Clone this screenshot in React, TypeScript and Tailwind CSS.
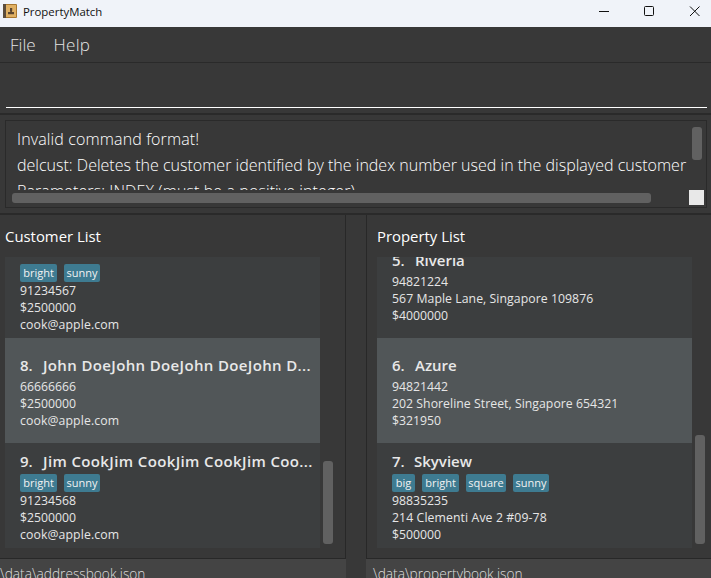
import React from "react";

type Entry = {
  index: string;
  name?: string;
  nameClass: string;
  tags: { label: string; className: string }[];
  lines: { text: string; className: string }[];
  rowClass: string;
};

const customers: Entry[] = [
  {
    index: "7.",
    nameClass: "",
    tags: [
      { label: "bright", className: "w-[37px]" },
      { label: "sunny", className: "w-[36px]" },
    ],
    lines: [
      { text: "91234567", className: "" },
      { text: "$2500000", className: "" },
      { text: "cook@apple.com", className: "tracking-[0.11px]" },
    ],
    rowClass: "h-[81px] bg-[#3c3e3f] pb-[5px]",
  },
  {
    index: "8.",
    name: "John DoeJohn DoeJohn DoeJohn D...",
    nameClass: "tracking-[0.36px]",
    tags: [],
    lines: [
      { text: "66666666", className: "" },
      { text: "$2500000", className: "" },
      { text: "cook@apple.com", className: "tracking-[0.11px]" },
    ],
    rowClass: "h-[105px] bg-[#515658] pb-[14px]",
  },
  {
    index: "9.",
    name: "Jim CookJim CookJim CookJim Coo...",
    nameClass: "tracking-[0.38px]",
    tags: [
      { label: "bright", className: "w-[37px]" },
      { label: "sunny", className: "w-[36px]" },
    ],
    lines: [
      { text: "91234568", className: "" },
      { text: "$2500000", className: "" },
      { text: "cook@apple.com", className: "tracking-[0.11px]" },
    ],
    rowClass: "h-[105px] bg-[#3c3e3f] pb-[5px]",
  },
];

const properties: Entry[] = [
  {
    index: "5.",
    name: "Riveria",
    nameClass: "",
    tags: [],
    lines: [
      { text: "94821224", className: "" },
      { text: "567 Maple Lane, Singapore 109876", className: "tracking-[0.06px]" },
      { text: "$4000000", className: "" },
    ],
    rowClass: "h-[81px] bg-[#3c3e3f] pb-[14px]",
  },
  {
    index: "6.",
    name: "Azure",
    nameClass: "",
    tags: [],
    lines: [
      { text: "94821442", className: "" },
      { text: "202 Shoreline Street, Singapore 654321", className: "tracking-[0.04px]" },
      { text: "$321950", className: "" },
    ],
    rowClass: "h-[105px] bg-[#515658] pb-[14px]",
  },
  {
    index: "7.",
    name: "Skyview",
    nameClass: "-ml-px",
    tags: [
      { label: "big", className: "w-[23px]" },
      { label: "bright", className: "w-[37px]" },
      { label: "square", className: "w-[40px]" },
      { label: "sunny", className: "w-[36px]" },
    ],
    lines: [
      { text: "98835235", className: "" },
      { text: "214 Clementi Ave 2 #09-78", className: "tracking-[0.1px]" },
      { text: "$500000", className: "" },
    ],
    rowClass: "h-[105px] bg-[#3c3e3f] pb-[5px]",
  },
];

function Card({ entry }: { entry: Entry }) {
  return (
    <li className={`flex shrink-0 flex-col justify-end overflow-hidden pl-[15px] ${entry.rowClass}`}>
      {entry.name && (
        <div className="flex h-[26px] shrink-0 items-start text-[15px] font-semibold leading-[26px] text-[#e8e8e8]">
          <span className="w-[23px] shrink-0">{entry.index}</span>
          <span className={`whitespace-nowrap ${entry.nameClass}`}>{entry.name}</span>
        </div>
      )}
      {entry.tags.length > 0 && (
        <div className="flex h-[18px] shrink-0 gap-[7px]">
          {entry.tags.map((tag) => (
            <span
              key={tag.label}
              className={`h-[18px] rounded-[2px] bg-[#3e7b91] text-center text-[11px] leading-[18px] text-[#f2f2f2] ${tag.className}`}
            >
              {tag.label}
            </span>
          ))}
        </div>
      )}
      {entry.lines.map((line) => (
        <p
          key={line.text}
          className={`h-[17px] shrink-0 whitespace-nowrap text-[12.25px] leading-[17px] text-[#e6e6e6] ${line.className}`}
        >
          {line.text}
        </p>
      ))}
    </li>
  );
}

function ListPanel({
  title,
  entries,
  thumbClass,
  className,
}: {
  title: string;
  entries: Entry[];
  thumbClass: string;
  className: string;
}) {
  return (
    <section className={`flex h-[344px] flex-col border-b border-[#282828] ${className}`}>
      <h2 className="h-[42px] shrink-0 pt-[10px] text-[14.9px] leading-[23px] text-white">{title}</h2>
      <div className="flex">
        <ul className="flex h-[291px] w-[315px] flex-col justify-end overflow-hidden">
          {entries.map((entry) => (
            <Card key={entry.index} entry={entry} />
          ))}
        </ul>
        <div className="flex h-[287px] flex-col justify-end pl-[3px]">
          <div className={`w-[10px] rounded-[3px] bg-[#616161] ${thumbClass}`} />
        </div>
      </div>
    </section>
  );
}

export default function App() {
  return (
    <div className="flex h-[578px] w-[711px] flex-col overflow-hidden bg-[#383838] font-['Open_Sans','Noto_Sans',sans-serif]">
      <header className="flex h-[27px] shrink-0 items-start bg-[#f0f3f9]">
        <svg className="ml-[3px] mt-[4px] h-[14px] w-[14px]" viewBox="0 0 14 14">
          <rect width="14" height="14" rx="1" fill="#a9772f" />
          <rect width="3" height="14" fill="#5b4c3c" />
          <rect x="3" y="1" width="10" height="12" fill="#e0b063" />
          <path d="M7 4h2.200v3l-.4 1H11v2.300H5V8h2.400L7 7z" fill="#5b4630" />
        </svg>
        <span className="ml-[6px] text-[11.4px] leading-[24px] text-[#111]">PropertyMatch</span>
        <svg className="ml-auto h-[27px] w-[120px]" viewBox="0 0 120 27" fill="none" stroke="#111" strokeWidth="1">
          <path d="M8 11.500h10" />
          <rect x="53.500" y="6.500" width="9" height="9" rx="1" />
          <path d="M99 6.500l9.500 9.500M108.500 6.500l-9.500 9.500" />
        </svg>
      </header>

      <nav className="flex h-[36px] shrink-0 gap-[18px] border-b border-[#2a2a2a] pl-[10px] text-[17px] font-light leading-[35px] text-[#e4e4e4]">
        <span>File</span>
        <span className="tracking-[0.25px]">Help</span>
      </nav>

      <div className="h-[52px] shrink-0 border-b-2 border-[#2a2a2a] pl-[6px] pr-[4px]">
        <div className="h-[45px] border-b border-white" />
      </div>

      <div className="h-[100px] shrink-0 border-b-2 border-[#2a2a2a] pl-[5px] pt-[5px]">
        <div className="flex h-[88px] w-[702px] border border-[#2a2a2a]">
          <div className="flex w-[683px] flex-col pt-[5px]">
            <div className="h-[64px] overflow-hidden whitespace-pre pl-[11px] text-[16px] font-light leading-[26px] text-white">
              <p className="tracking-[0.13px]">Invalid command format!</p>
              <p className="tracking-[0.01px]">delcust: Deletes the customer identified by the index number used in the displayed customer</p>
              <p className="tracking-[0.09px]">Parameters: INDEX (must be a positive integer)</p>
            </div>
            <div className="ml-[6px] mt-[3px] h-[10px] w-[639px] rounded-[3px] bg-[#616161]" />
          </div>
          <div className="flex flex-col pt-[6px]">
            <div className="ml-[3px] h-[33px] w-[10px] rounded-[3px] bg-[#616161]" />
            <div className="mt-[30px] h-[15px] w-[15px] bg-[#e8e8e8]" />
          </div>
        </div>
      </div>

      <main className="flex h-[344px] shrink-0 justify-between">
        <ListPanel title="Customer List" entries={customers} thumbClass="h-[83px]" className="w-[346px] border-r pl-[5px]" />
        <ListPanel title="Property List" entries={properties} thumbClass="h-[109px]" className="w-[345px] border-l pl-[10px]" />
      </main>

      <footer className="flex min-h-0 flex-1 justify-between overflow-hidden text-[13.7px] font-light leading-[29px] text-[#dedede]">
        <span className="w-[346px] bg-[#444]">\data\addressbook.json</span>
        <span className="w-[345px] bg-[#444] pl-[7px]">\data\propertybook.json</span>
      </footer>
    </div>
  );
}
